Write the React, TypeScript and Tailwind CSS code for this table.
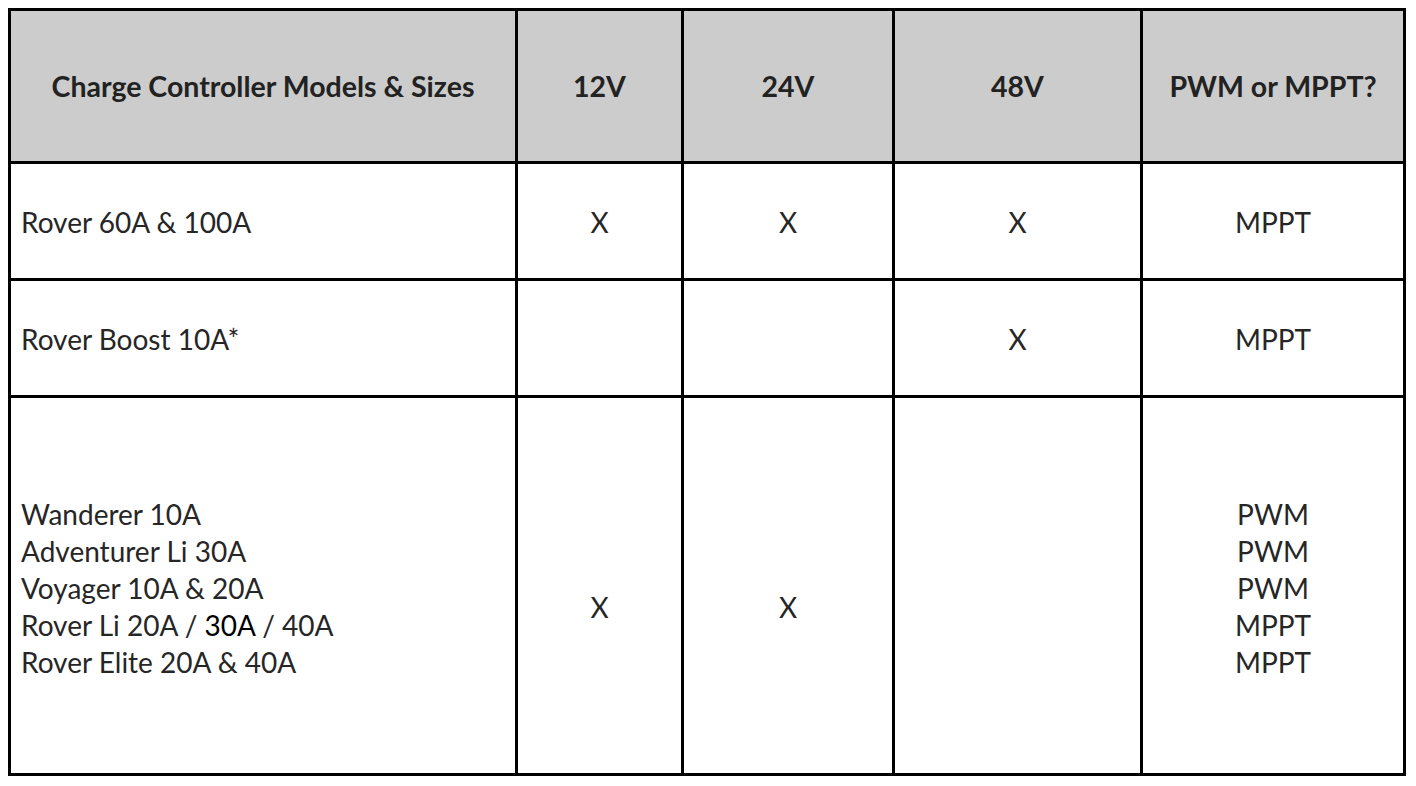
import React from "react";

const font = { fontFamily: "Lato, 'Open Sans', sans-serif" };

function Cell({ children, head = false, left = false }: { children?: React.ReactNode; head?: boolean; left?: boolean }) {
  return (
    <div
      className={
        (head ? "bg-[#cbcccb] font-bold text-[#222222] text-[28.5px] " : "bg-white text-[#262626] text-[28px] ") +
        (left ? "flex items-center justify-start pl-[10px] " : "flex items-center justify-center ") +
        "leading-[37px]"
      }
    >
      {children}
    </div>
  );
}

export default function App() {
  return (
    <div className="w-[1416px] h-[786px] bg-white p-[8px]" style={font}>
      <div className="grid grid-cols-[504px_163px_208px_245px_260px] grid-rows-[150px_114px_114px_375px] gap-[3px] border-[3px] border-black bg-black w-[1398px]">
        <Cell head>Charge Controller Models &amp; Sizes</Cell>
        <Cell head>12V</Cell>
        <Cell head>24V</Cell>
        <Cell head>48V</Cell>
        <Cell head>PWM or MPPT?</Cell>

        <Cell left><div className="pt-[3px]">Rover 60A &amp; 100A</div></Cell>
        <Cell><div className="pt-[3px]">X</div></Cell>
        <Cell><div className="pt-[3px]">X</div></Cell>
        <Cell><div className="pt-[3px]">X</div></Cell>
        <Cell><div className="pt-[3px]">MPPT</div></Cell>

        <Cell left><div className="pt-[3px]">Rover Boost 10A*</div></Cell>
        <Cell />
        <Cell />
        <Cell><div className="pt-[3px]">X</div></Cell>
        <Cell><div className="pt-[3px]">MPPT</div></Cell>

        <Cell left>
          <div className="pt-[6px]">
            <div>Wanderer 10A</div>
            <div>Adventurer Li 30A</div>
            <div>Voyager 10A &amp; 20A</div>
            <div>
              Rover Li 20A / <span className="text-black">30A</span> / 40A
            </div>
            <div>Rover Elite 20A &amp; 40A</div>
          </div>
        </Cell>
        <Cell>
          <div className="pt-[44px]">X</div>
        </Cell>
        <Cell>
          <div className="pt-[44px]">X</div>
        </Cell>
        <Cell />
        <Cell>
          <div className="pt-[6px] text-center">
            <div>PWM</div>
            <div>PWM</div>
            <div>PWM</div>
            <div>MPPT</div>
            <div>MPPT</div>
          </div>
        </Cell>
      </div>
    </div>
  );
}
